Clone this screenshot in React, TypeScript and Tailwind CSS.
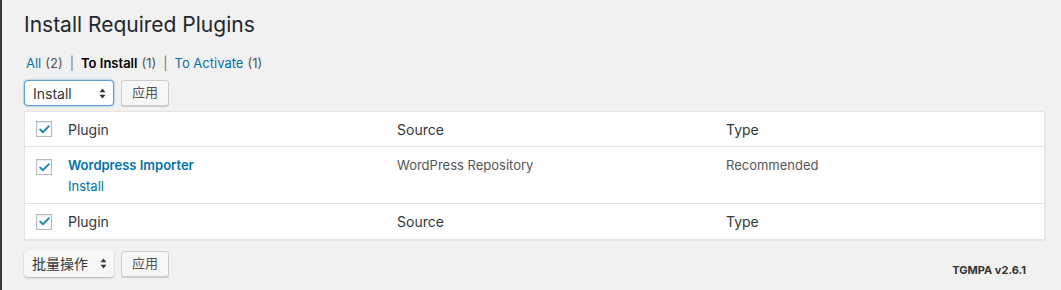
import { Check } from "lucide-react";

function Box() {
  return (
    <span className="flex h-4 w-4 items-center justify-center border border-[#b4b9be] bg-white shadow-[inset_0_1px_2px_rgba(0,0,0,0.1)]">
      <Check size={13} strokeWidth={3.5} className="text-[#1e8cbe]" />
    </span>
  );
}

function Arrows() {
  return (
    <svg width="7" height="11" viewBox="0 0 7 11" className="text-[#333]">
      <path d="M3.5 0.5L6.5 4.2H0.5Z" fill="currentColor" />
      <path d="M3.5 10.5L6.5 6.8H0.5Z" fill="currentColor" />
    </svg>
  );
}

function Actions({ label, focused }: { label: string; focused?: boolean }) {
  return (
    <div className="flex items-center gap-[7px]">
      <div
        className={
          focused
            ? "flex h-[26px] w-[90px] items-center justify-between rounded-[4px] border border-[#5b9dd9] bg-white pl-2 pr-[7px] text-[14px] text-[#32373c] shadow-[0_0_2px_rgba(30,140,190,0.8)]"
            : "flex h-[27px] w-[90px] items-center justify-between rounded-[4px] bg-[#f7f7f7] pl-[8px] pr-[7px] text-[14px] text-[#32373c] shadow-[0_1px_2px_rgba(0,0,0,0.25)]"
        }
      >
        <span>{label}</span>
        <Arrows />
      </div>
      <button className="flex h-[26px] w-[48px] items-center justify-center rounded-[3px] border border-[#ccc] bg-[#f7f7f7] text-[13px] text-[#555] shadow-[0_1px_0_#ccc]">
        应用
      </button>
    </div>
  );
}

function Row({
  plugin,
  source,
  type,
  head,
}: {
  plugin: React.ReactNode;
  source: string;
  type: string;
  head?: boolean;
}) {
  return (
    <div
      className={
        head
          ? "grid grid-cols-[43px_329px_329px_1fr] items-center text-[14px] text-[#32373c]"
          : "grid grid-cols-[43px_329px_329px_1fr] items-start text-[13px] text-[#555]"
      }
    >
      <div className={head ? "flex pl-[11px]" : "flex pl-[11px] pt-[12px]"}>
        <Box />
      </div>
      <div>{plugin}</div>
      <div className={head ? "" : "pt-[9px]"}>{source}</div>
      <div className={head ? "" : "pt-[9px]"}>{type}</div>
    </div>
  );
}

export default function App() {
  return (
    <div
      className="h-[290px] w-[1061px] border-l-2 border-[#3a3a3a] bg-[#f1f1f1] pl-[22px] pr-[16px]"
      style={{ fontFamily: "Inter, 'Noto Sans CJK SC', sans-serif" }}
    >
      <h1 className="pt-[10px] text-[21px] font-normal leading-[30px] text-[#23282d]">
        Install Required Plugins
      </h1>
      <div className="mt-[14px] flex items-center text-[13px] leading-[18px] text-[#555] pl-[2px]">
        <span className="text-[#0073aa]">All</span>
        <span className="ml-1">(2)</span>
        <span className="mx-[7px] text-[#777]">|</span>
        <span className="font-semibold text-[#000]">To Install</span>
        <span className="ml-1">(1)</span>
        <span className="mx-[7px] text-[#777]">|</span>
        <span className="text-[#0073aa]">To Activate</span>
        <span className="ml-1">(1)</span>
      </div>
      <div className="mt-[8px]">
        <Actions label="Install" focused />
      </div>
      <div className="mt-[5px] border border-[#e5e5e5] bg-white shadow-[0_1px_1px_rgba(0,0,0,0.04)]">
        <div className="flex h-[35px] items-center border-b border-[#e1e1e1]">
          <div className="w-full">
            <Row head plugin="Plugin" source="Source" type="Type" />
          </div>
        </div>
        <div className="h-[57px] border-b border-[#e1e1e1]">
          <Row
            plugin={
              <div className="pt-[9px] leading-[18px]">
                <div className="font-semibold text-[#0073aa]">Wordpress Importer</div>
                <div className="mt-[3px] text-[#0073aa]">Install</div>
              </div>
            }
            source="WordPress Repository"
            type="Recommended"
          />
        </div>
        <div className="flex h-[35px] items-center">
          <div className="w-full">
            <Row head plugin="Plugin" source="Source" type="Type" />
          </div>
        </div>
      </div>
      <div className="mt-[10px] flex items-start justify-between">
        <Actions label="批量操作" />
        <span className="mt-[12px] mr-[19px] text-[11px] font-bold text-[#333]">TGMPA v2.6.1</span>
      </div>
    </div>
  );
}
